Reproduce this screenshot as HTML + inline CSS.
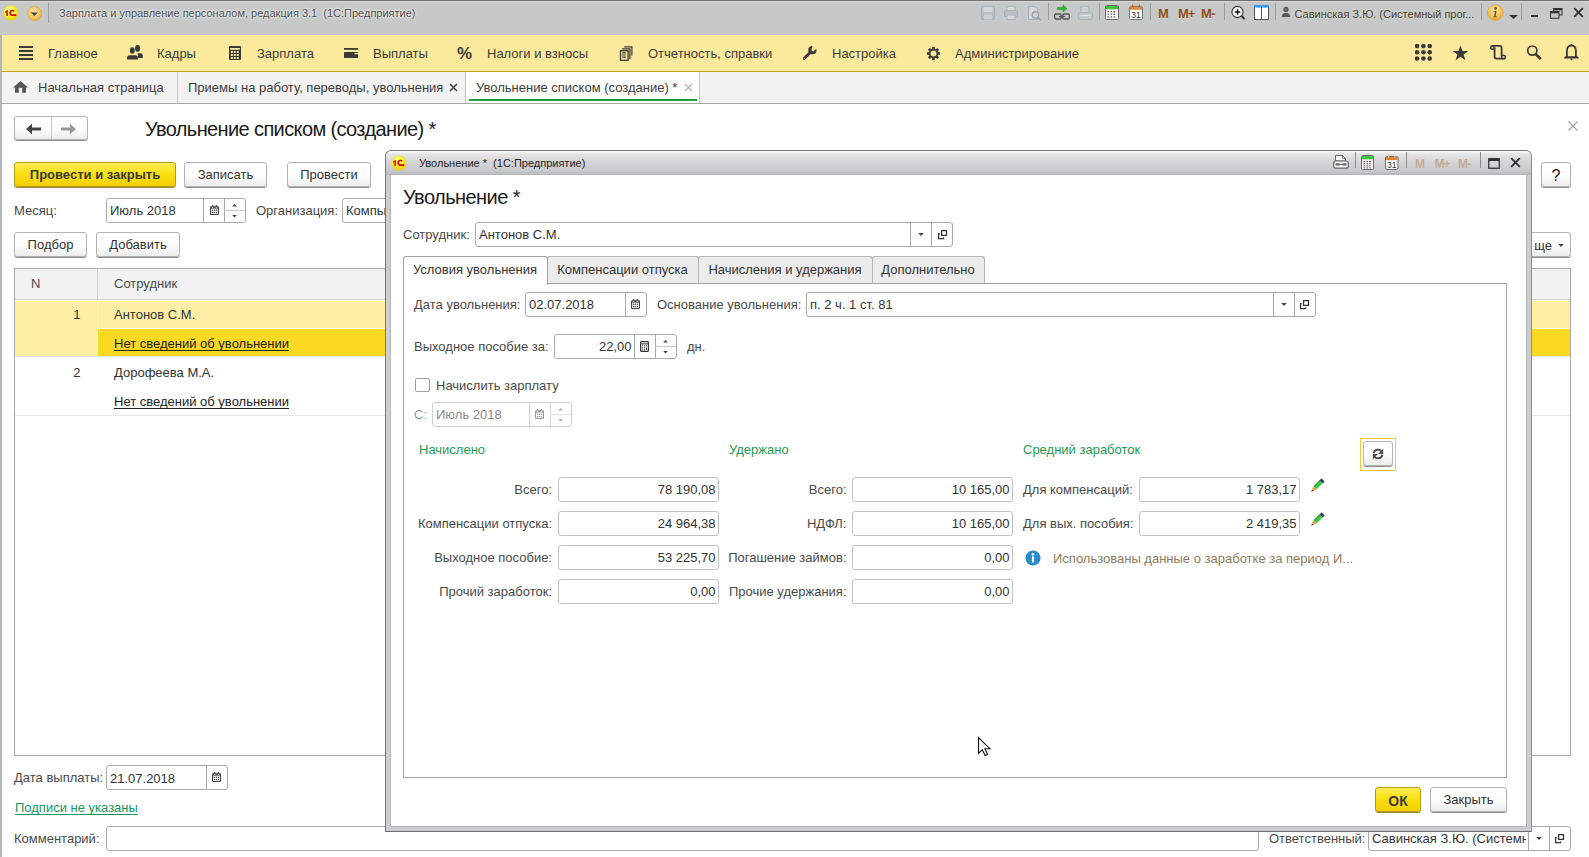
<!DOCTYPE html><html><head><meta charset="utf-8"><style>html,body{margin:0;padding:0;}body{width:1589px;height:857px;overflow:hidden;position:relative;background:#fff;font-family:"Liberation Sans", sans-serif;}u{text-decoration-skip-ink:none;text-underline-offset:1.5px;}</style></head><body><div style="position:absolute;left:0px;top:0px;width:1589px;height:35px;background:#c7c8c8;"></div>
<div style="position:absolute;left:0px;top:1px;width:1589px;height:1px;background:#d9d9d9;"></div>
<div style="position:absolute;left:0px;top:34px;width:1589px;height:1px;background:#c9c3cd;"></div>
<div style="position:absolute;left:0px;top:0px;width:1589px;height:1px;background:#6f6f6f;"></div>
<svg style="position:absolute;left:3px;top:5px" width="16" height="16" viewBox="0 0 16 16"><defs><radialGradient id="lg1" cx="0.42" cy="0.35" r="0.7"><stop offset="0" stop-color="#fbff9a"/><stop offset="0.55" stop-color="#f8ea2a"/><stop offset="1" stop-color="#f0cc00"/></radialGradient></defs><circle cx="8" cy="8" r="7.4" fill="url(#lg1)"/><path d="M2.1 6.4 L4 5.2 H4.9 V10.9 H3.4 V7.2 L2.1 7.8 Z" fill="#e00000"/><path d="M11.1 6.3 A2.3 2.3 0 1 0 9.1 10.1 H13.3" fill="none" stroke="#e00000" stroke-width="1.6"/></svg>
<svg style="position:absolute;left:26.5px;top:5.5px" width="15" height="15" viewBox="0 0 15 15"><defs><radialGradient id="dg1" cx="0.45" cy="0.35" r="0.65"><stop offset="0" stop-color="#ffe3a0"/><stop offset="1" stop-color="#f2b447"/></radialGradient></defs><circle cx="7.5" cy="7.5" r="7" fill="url(#dg1)" stroke="#d7a03c" stroke-width="0.7"/><path d="M3.7 6.5 L11 6.5 L7.35 9.9 Z" fill="#4a4a4a"/></svg>
<div style="position:absolute;left:48px;top:3px;width:1px;height:20px;background:#a0a0a0;"></div>
<div style="position:absolute;left:59px;top:6.76px;line-height:12.65px;font-size:11px;color:#4a4a4a;font-weight:normal;white-space:nowrap;text-shadow:0 0 3px #fff,0 0 2px #fff;">Зарплата и управление персоналом, редакция 3.1&nbsp; (1С:Предприятие)</div>
<div style="position:absolute;left:0px;top:35px;width:1589px;height:36px;background:#fbe99c;"></div>
<div style="position:absolute;left:0px;top:68px;width:1589px;height:3px;background:#fcec9e;"></div>
<div style="position:absolute;left:0px;top:71px;width:1589px;height:1px;background:#c3a626;"></div>
<div style="position:absolute;left:48px;top:47.32px;line-height:14.95px;font-size:13px;color:#3d3d3d;font-weight:normal;white-space:nowrap;">Главное</div>
<div style="position:absolute;left:157px;top:47.32px;line-height:14.95px;font-size:13px;color:#3d3d3d;font-weight:normal;white-space:nowrap;">Кадры</div>
<div style="position:absolute;left:257px;top:47.32px;line-height:14.95px;font-size:13px;color:#3d3d3d;font-weight:normal;white-space:nowrap;">Зарплата</div>
<div style="position:absolute;left:373px;top:47.32px;line-height:14.95px;font-size:13px;color:#3d3d3d;font-weight:normal;white-space:nowrap;">Выплаты</div>
<div style="position:absolute;left:487px;top:47.32px;line-height:14.95px;font-size:13px;color:#3d3d3d;font-weight:normal;white-space:nowrap;">Налоги и взносы</div>
<div style="position:absolute;left:648px;top:47.32px;line-height:14.95px;font-size:13px;color:#3d3d3d;font-weight:normal;white-space:nowrap;">Отчетность, справки</div>
<div style="position:absolute;left:832px;top:47.32px;line-height:14.95px;font-size:13px;color:#3d3d3d;font-weight:normal;white-space:nowrap;">Настройка</div>
<div style="position:absolute;left:955px;top:47.32px;line-height:14.95px;font-size:13px;color:#3d3d3d;font-weight:normal;white-space:nowrap;">Администрирование</div>
<div style="position:absolute;left:0px;top:72px;width:1589px;height:31px;background:#f2f2f2;"></div>
<div style="position:absolute;left:0px;top:103px;width:1589px;height:1px;background:#a6a6a6;"></div>
<div style="position:absolute;left:177px;top:72px;width:1px;height:31px;background:#c6c6c6;"></div>
<div style="position:absolute;left:465px;top:72px;width:1px;height:31px;background:#c6c6c6;"></div>
<div style="position:absolute;left:466px;top:72px;width:234px;height:31px;background:#fff;"></div>
<div style="position:absolute;left:699px;top:72px;width:1px;height:31px;background:#c6c6c6;"></div>
<div style="position:absolute;left:469px;top:99px;width:228px;height:2px;background:#1c9a48;"></div>
<div style="position:absolute;left:38px;top:81.32px;line-height:14.95px;font-size:13px;color:#3d3d3d;font-weight:normal;white-space:nowrap;">Начальная страница</div>
<div style="position:absolute;left:188px;top:81.32px;line-height:14.95px;font-size:13px;color:#3d3d3d;font-weight:normal;white-space:nowrap;">Приемы на работу, переводы, увольнения</div>
<div style="position:absolute;left:476px;top:81.32px;line-height:14.95px;font-size:13px;color:#3d3d3d;font-weight:normal;white-space:nowrap;">Увольнение списком (создание) *</div>
<div style="position:absolute;left:0px;top:35px;width:2px;height:822px;background:#b5b5b5;"></div>
<svg style="position:absolute;left:1568px;top:121px" width="10" height="10" viewBox="0 0 10 10"><path d="M0.5 0.5 L9.5 9.5 M9.5 0.5 L0.5 9.5" stroke="#a0a0a0" stroke-width="1.2"/></svg>
<div style="position:absolute;left:14px;top:116px;width:72px;height:22px;border-radius:3px;background:linear-gradient(#ffffff,#fdfdfd 55%,#ececec);border:1px solid #b3b3b3;box-shadow:0 1px 0 #8f8f8f;"></div>
<div style="position:absolute;left:51px;top:117px;width:1px;height:22px;background:#c9c9c9;"></div>
<svg style="position:absolute;left:25px;top:123px" width="17" height="12" viewBox="0 0 17 12"><path d="M1 6 L7 0.8 V4.4 H16 V7.6 H7 V11.2 Z" fill="#444"/></svg>
<svg style="position:absolute;left:60px;top:123px" width="17" height="12" viewBox="0 0 17 12"><path d="M16 6 L10 0.8 V4.4 H1 V7.6 H10 V11.2 Z" fill="#999"/></svg>
<div style="position:absolute;left:145px;top:118.37px;line-height:23.00px;font-size:20px;color:#1a1a1a;font-weight:normal;white-space:nowrap;letter-spacing:-0.62px;">Увольнение списком (создание) *</div>
<div style="position:absolute;left:14px;top:162px;width:160px;height:23px;border-radius:3px;background:linear-gradient(#ffec55,#fbdf10 50%,#f3d000);border:1px solid #b59b1c;box-shadow:0 1px 0 #9c8a3a;"></div>
<div style="position:absolute;left:14px;width:162px;top:168.33px;line-height:14.95px;font-size:13px;text-align:center;color:#3a3a3a;font-weight:bold;white-space:nowrap">Провести и закрыть</div>
<div style="position:absolute;left:184px;top:162px;width:81px;height:23px;border-radius:3px;background:linear-gradient(#ffffff,#fdfdfd 55%,#ececec);border:1px solid #b3b3b3;box-shadow:0 1px 0 #8f8f8f;"></div>
<div style="position:absolute;left:184px;width:83px;top:168.33px;line-height:14.95px;font-size:13px;text-align:center;color:#333;font-weight:normal;white-space:nowrap">Записать</div>
<div style="position:absolute;left:287px;top:162px;width:82px;height:23px;border-radius:3px;background:linear-gradient(#ffffff,#fdfdfd 55%,#ececec);border:1px solid #b3b3b3;box-shadow:0 1px 0 #8f8f8f;"></div>
<div style="position:absolute;left:287px;width:84px;top:168.33px;line-height:14.95px;font-size:13px;text-align:center;color:#333;font-weight:normal;white-space:nowrap">Провести</div>
<div style="position:absolute;left:1541px;top:162px;width:28px;height:23px;border-radius:3px;background:linear-gradient(#ffffff,#fdfdfd 55%,#ececec);border:1px solid #b3b3b3;box-shadow:0 1px 0 #8f8f8f;"></div>
<div style="position:absolute;left:1556px;top:167.46px;line-height:18.40px;font-size:16px;color:#111;font-weight:normal;white-space:nowrap;transform:translateX(-50%);">?</div>
<div style="position:absolute;left:14px;top:204.02px;line-height:14.95px;font-size:13px;color:#4a4a4a;font-weight:normal;white-space:nowrap;">Месяц:</div>
<div style="position:absolute;left:106px;top:198px;width:138px;height:23px;border-radius:3px;border:1px solid #a9a9a9;background:#fff"></div>
<div style="position:absolute;left:203px;top:199px;width:1px;height:23px;background:#a9a9a9;"></div>
<div style="position:absolute;left:224px;top:199px;width:1px;height:23px;background:#a9a9a9;"></div>
<div style="position:absolute;left:224px;top:210px;width:21px;height:1px;background:#c9c9c9;"></div>
<div style="position:absolute;left:110px;top:204.02px;line-height:14.95px;font-size:13px;color:#333;font-weight:normal;white-space:nowrap;">Июль 2018</div>
<svg style="position:absolute;left:210px;top:205px" width="9" height="10" viewBox="0 0 9 10"><rect x="0" y="1.2" width="9" height="8.8" rx="1.3" fill="#444"/><rect x="1.1" y="3.6" width="6.8" height="5.3" fill="#fff"/><rect x="1.9" y="0" width="1.4" height="2.4" fill="#444"/><rect x="5.7" y="0" width="1.4" height="2.4" fill="#444"/><rect x="1.9" y="1.9" width="1.4" height="0.8" fill="#fff"/><rect x="5.7" y="1.9" width="1.4" height="0.8" fill="#fff"/><circle cx="2.5" cy="5.3" r="0.75" fill="#444"/><circle cx="2.5" cy="7.4" r="0.75" fill="#444"/><circle cx="4.5" cy="5.3" r="0.75" fill="#444"/><circle cx="4.5" cy="7.4" r="0.75" fill="#444"/><circle cx="6.5" cy="5.3" r="0.75" fill="#444"/><circle cx="6.5" cy="7.4" r="0.75" fill="#444"/></svg>
<svg style="position:absolute;left:232.0px;top:204px" width="5" height="3" viewBox="0 0 5 3"><path d="M2.5 0 L4.8 2.4 L0.2 2.4 Z" fill="#444"/></svg>
<svg style="position:absolute;left:232.0px;top:214.5px" width="5" height="3" viewBox="0 0 5 3"><path d="M0.2 0 L4.8 0 L2.5 2.4 Z" fill="#444"/></svg>
<div style="position:absolute;left:256px;top:204.02px;line-height:14.95px;font-size:13px;color:#4a4a4a;font-weight:normal;white-space:nowrap;">Организация:</div>
<div style="position:absolute;left:342px;top:198px;width:76px;height:23px;border-radius:3px;border:1px solid #a9a9a9;background:#fff"></div>
<div style="position:absolute;left:346px;top:204.02px;line-height:14.95px;font-size:13px;color:#333;font-weight:normal;white-space:nowrap;">Компьютер</div>
<div style="position:absolute;left:14px;top:232px;width:71px;height:23px;border-radius:3px;background:linear-gradient(#ffffff,#fdfdfd 55%,#ececec);border:1px solid #b3b3b3;box-shadow:0 1px 0 #8f8f8f;"></div>
<div style="position:absolute;left:14px;width:73px;top:238.33px;line-height:14.95px;font-size:13px;text-align:center;color:#333;font-weight:normal;white-space:nowrap">Подбор</div>
<div style="position:absolute;left:96px;top:232px;width:82px;height:23px;border-radius:3px;background:linear-gradient(#ffffff,#fdfdfd 55%,#ececec);border:1px solid #b3b3b3;box-shadow:0 1px 0 #8f8f8f;"></div>
<div style="position:absolute;left:96px;width:84px;top:238.33px;line-height:14.95px;font-size:13px;text-align:center;color:#333;font-weight:normal;white-space:nowrap">Добавить</div>
<div style="position:absolute;left:1490px;top:232px;width:79px;height:23px;border-radius:3px;background:linear-gradient(#ffffff,#fdfdfd 55%,#ececec);border:1px solid #b3b3b3;box-shadow:0 1px 0 #8f8f8f;"></div>
<div style="position:absolute;right:37px;top:239.02px;line-height:14.95px;font-size:13px;color:#333;font-weight:normal;white-space:nowrap;text-align:right;">ще</div>
<svg style="position:absolute;left:1558px;top:244px" width="6" height="4" viewBox="0 0 6 4"><path d="M0.2 0 L5.8 0 L3 3 Z" fill="#444"/></svg>
<div style="position:absolute;left:14px;top:268px;width:1557px;height:488px;border:1px solid #a8a8a8;box-sizing:border-box;background:#fff;"></div>
<div style="position:absolute;left:15px;top:269px;width:1555px;height:30px;background:#f2f2f2;"></div>
<div style="position:absolute;left:15px;top:299px;width:1555px;height:1px;background:#cfcfd6;"></div>
<div style="position:absolute;left:97px;top:269px;width:1px;height:30px;background:#d6d6d6;"></div>
<div style="position:absolute;left:31px;top:277.02px;line-height:14.95px;font-size:13px;color:#4a4a4a;font-weight:normal;white-space:nowrap;">N</div>
<div style="position:absolute;left:114px;top:277.02px;line-height:14.95px;font-size:13px;color:#4a4a4a;font-weight:normal;white-space:nowrap;">Сотрудник</div>
<div style="position:absolute;left:15px;top:301px;width:1555px;height:55px;background:#fdf0a4;"></div>
<div style="position:absolute;left:98px;top:329px;width:1472px;height:27px;background:#fad922;"></div>
<div style="position:absolute;left:97px;top:300px;width:1px;height:56px;background:#fdf6cf;"></div>
<div style="position:absolute;left:98px;top:328px;width:1472px;height:1px;background:#fdf8dc;"></div>
<div style="position:absolute;right:1508.5px;top:307.52px;line-height:14.95px;font-size:13px;color:#333;font-weight:normal;white-space:nowrap;text-align:right;">1</div>
<div style="position:absolute;left:114px;top:307.52px;line-height:14.95px;font-size:13px;color:#333;font-weight:normal;white-space:nowrap;">Антонов С.М.</div>
<div style="position:absolute;left:114px;top:336.52px;line-height:14.95px;font-size:13px;color:#222;font-weight:normal;white-space:nowrap;"><u>Нет сведений об увольнении</u></div>
<div style="position:absolute;left:15px;top:356px;width:1555px;height:1px;background:#e6e6e6;"></div>
<div style="position:absolute;right:1508.5px;top:365.52px;line-height:14.95px;font-size:13px;color:#333;font-weight:normal;white-space:nowrap;text-align:right;">2</div>
<div style="position:absolute;left:114px;top:365.52px;line-height:14.95px;font-size:13px;color:#333;font-weight:normal;white-space:nowrap;">Дорофеева М.А.</div>
<div style="position:absolute;left:114px;top:394.52px;line-height:14.95px;font-size:13px;color:#222;font-weight:normal;white-space:nowrap;"><u>Нет сведений об увольнении</u></div>
<div style="position:absolute;left:15px;top:415px;width:1555px;height:1px;background:#e6e6e6;"></div>
<div style="position:absolute;left:14px;top:771.32px;line-height:14.95px;font-size:13px;color:#4a4a4a;font-weight:normal;white-space:nowrap;">Дата выплаты:</div>
<div style="position:absolute;left:106px;top:765px;width:120px;height:23px;border-radius:3px;border:1px solid #a9a9a9;background:#fff"></div>
<div style="position:absolute;left:206px;top:766px;width:1px;height:23px;background:#a9a9a9;"></div>
<div style="position:absolute;left:110px;top:772.02px;line-height:14.95px;font-size:13px;color:#333;font-weight:normal;white-space:nowrap;">21.07.2018</div>
<svg style="position:absolute;left:212px;top:772px" width="9" height="10" viewBox="0 0 9 10"><rect x="0" y="1.2" width="9" height="8.8" rx="1.3" fill="#444"/><rect x="1.1" y="3.6" width="6.8" height="5.3" fill="#fff"/><rect x="1.9" y="0" width="1.4" height="2.4" fill="#444"/><rect x="5.7" y="0" width="1.4" height="2.4" fill="#444"/><rect x="1.9" y="1.9" width="1.4" height="0.8" fill="#fff"/><rect x="5.7" y="1.9" width="1.4" height="0.8" fill="#fff"/><circle cx="2.5" cy="5.3" r="0.75" fill="#444"/><circle cx="2.5" cy="7.4" r="0.75" fill="#444"/><circle cx="4.5" cy="5.3" r="0.75" fill="#444"/><circle cx="4.5" cy="7.4" r="0.75" fill="#444"/><circle cx="6.5" cy="5.3" r="0.75" fill="#444"/><circle cx="6.5" cy="7.4" r="0.75" fill="#444"/></svg>
<div style="position:absolute;left:15px;top:800.52px;line-height:14.95px;font-size:13px;color:#14985a;font-weight:normal;white-space:nowrap;"><u>Подписи не указаны</u></div>
<div style="position:absolute;left:14px;top:831.82px;line-height:14.95px;font-size:13px;color:#4a4a4a;font-weight:normal;white-space:nowrap;">Комментарий:</div>
<div style="position:absolute;left:106px;top:826px;width:1151px;height:23px;border-radius:3px;border:1px solid #a9a9a9;background:#fff"></div>
<div style="position:absolute;left:1269px;top:831.82px;line-height:14.95px;font-size:13px;color:#4a4a4a;font-weight:normal;white-space:nowrap;">Ответственный:</div>
<div style="position:absolute;left:1368px;top:826px;width:201px;height:23px;border-radius:3px;border:1px solid #a9a9a9;background:#fff"></div>
<div style="position:absolute;left:1528px;top:827px;width:1px;height:23px;background:#a9a9a9;"></div>
<div style="position:absolute;left:1549px;top:827px;width:1px;height:23px;background:#a9a9a9;"></div>
<div style="position:absolute;left:1372px;top:831.82px;line-height:14.95px;font-size:13px;color:#333;font-weight:normal;white-space:nowrap;width:154px;overflow:hidden;">Савинская З.Ю. (Системн</div>
<svg style="position:absolute;left:1536px;top:837px" width="6" height="4" viewBox="0 0 6 4"><path d="M0.2 0 L5.8 0 L3 3 Z" fill="#444"/></svg>
<svg style="position:absolute;left:1554px;top:833px" width="11" height="11" viewBox="0 0 11 11"><path d="M4.6 1.7 H9.5 V6.4 H4.6 Z" fill="none" stroke="#333" stroke-width="1.25"/><path d="M2.8 4.6 H1.6 V9.5 H6.6 V8.6" fill="none" stroke="#333" stroke-width="1.25"/></svg>
<div style="position:absolute;left:385px;top:150px;width:1145px;height:680px;border:1px solid #777;border-right-color:#8d8d8d;border-bottom-color:#6f6f6f;border-radius:6px 6px 0 0;background:#cdcdcf;"></div>
<div style="position:absolute;left:386px;top:151px;width:1145px;height:24px;border-radius:5px 5px 0 0;background:linear-gradient(#fafafa 0px,#e6e6e7 3px,#d6d6d8 10px,#c9cacc 19px,#b9babc 24px);"></div>
<div style="position:absolute;left:391px;top:175px;width:1135px;height:651px;background:#fff;box-shadow:0 0 0 1px #b5b5b5;"></div>
<svg style="position:absolute;left:391px;top:155px" width="16" height="16" viewBox="0 0 16 16"><defs><radialGradient id="lg2" cx="0.42" cy="0.35" r="0.7"><stop offset="0" stop-color="#fbff9a"/><stop offset="0.55" stop-color="#f8ea2a"/><stop offset="1" stop-color="#f0cc00"/></radialGradient></defs><circle cx="8" cy="8" r="7.4" fill="url(#lg2)"/><path d="M2.1 6.4 L4 5.2 H4.9 V10.9 H3.4 V7.2 L2.1 7.8 Z" fill="#e00000"/><path d="M11.1 6.3 A2.3 2.3 0 1 0 9.1 10.1 H13.3" fill="none" stroke="#e00000" stroke-width="1.6"/></svg>
<div style="position:absolute;left:419px;top:157.46px;line-height:12.65px;font-size:11px;color:#1e1e1e;font-weight:normal;white-space:nowrap;">Увольнение *&nbsp; (1С:Предприятие)</div>
<div style="position:absolute;left:403px;top:185.57px;line-height:23.00px;font-size:20px;color:#1a1a1a;font-weight:normal;white-space:nowrap;letter-spacing:-0.55px;">Увольнение *</div>
<div style="position:absolute;left:403px;top:228.02px;line-height:14.95px;font-size:13px;color:#4a4a4a;font-weight:normal;white-space:nowrap;">Сотрудник:</div>
<div style="position:absolute;left:475px;top:222px;width:476px;height:23px;border-radius:3px;border:1px solid #a9a9a9;background:#fff"></div>
<div style="position:absolute;left:910px;top:223px;width:1px;height:23px;background:#a9a9a9;"></div>
<div style="position:absolute;left:931px;top:223px;width:1px;height:23px;background:#a9a9a9;"></div>
<div style="position:absolute;left:479px;top:228.02px;line-height:14.95px;font-size:13px;color:#333;font-weight:normal;white-space:nowrap;">Антонов С.М.</div>
<svg style="position:absolute;left:918px;top:233px" width="6" height="4" viewBox="0 0 6 4"><path d="M0.2 0 L5.8 0 L3 3 Z" fill="#444"/></svg>
<svg style="position:absolute;left:937px;top:229px" width="11" height="11" viewBox="0 0 11 11"><path d="M4.6 1.7 H9.5 V6.4 H4.6 Z" fill="none" stroke="#333" stroke-width="1.25"/><path d="M2.8 4.6 H1.6 V9.5 H6.6 V8.6" fill="none" stroke="#333" stroke-width="1.25"/></svg>
<div style="position:absolute;left:403px;top:283px;width:1104px;height:495px;border:1px solid #a3a3a3;box-sizing:border-box;background:#fff;"></div>
<div style="position:absolute;left:547px;top:256px;width:150px;height:26px;border:1px solid #b5b5b5;border-bottom:none;border-radius:3px 3px 0 0;background:#ececec;"></div>
<div style="position:absolute;left:622.5px;top:262.52px;line-height:14.95px;font-size:13px;color:#333;font-weight:normal;white-space:nowrap;transform:translateX(-50%);">Компенсации отпуска</div>
<div style="position:absolute;left:698px;top:256px;width:173px;height:26px;border:1px solid #b5b5b5;border-bottom:none;border-radius:3px 3px 0 0;background:#ececec;"></div>
<div style="position:absolute;left:785.0px;top:262.52px;line-height:14.95px;font-size:13px;color:#333;font-weight:normal;white-space:nowrap;transform:translateX(-50%);">Начисления и удержания</div>
<div style="position:absolute;left:872px;top:256px;width:111px;height:26px;border:1px solid #b5b5b5;border-bottom:none;border-radius:3px 3px 0 0;background:#ececec;"></div>
<div style="position:absolute;left:928.0px;top:262.52px;line-height:14.95px;font-size:13px;color:#333;font-weight:normal;white-space:nowrap;transform:translateX(-50%);">Дополнительно</div>
<div style="position:absolute;left:403px;top:256px;width:143px;height:28px;border:1px solid #a3a3a3;border-bottom:none;border-radius:3px 3px 0 0;background:#fff;box-sizing:content-box"></div>
<div style="position:absolute;left:475.0px;top:262.52px;line-height:14.95px;font-size:13px;color:#333;font-weight:normal;white-space:nowrap;transform:translateX(-50%);">Условия увольнения</div>
<div style="position:absolute;left:414px;top:298.02px;line-height:14.95px;font-size:13px;color:#4a4a4a;font-weight:normal;white-space:nowrap;">Дата увольнения:</div>
<div style="position:absolute;left:525px;top:292px;width:120px;height:23px;border-radius:3px;border:1px solid #a9a9a9;background:#fff"></div>
<div style="position:absolute;left:625px;top:293px;width:1px;height:23px;background:#a9a9a9;"></div>
<div style="position:absolute;left:529px;top:298.02px;line-height:14.95px;font-size:13px;color:#333;font-weight:normal;white-space:nowrap;">02.07.2018</div>
<svg style="position:absolute;left:631px;top:299px" width="9" height="10" viewBox="0 0 9 10"><rect x="0" y="1.2" width="9" height="8.8" rx="1.3" fill="#444"/><rect x="1.1" y="3.6" width="6.8" height="5.3" fill="#fff"/><rect x="1.9" y="0" width="1.4" height="2.4" fill="#444"/><rect x="5.7" y="0" width="1.4" height="2.4" fill="#444"/><rect x="1.9" y="1.9" width="1.4" height="0.8" fill="#fff"/><rect x="5.7" y="1.9" width="1.4" height="0.8" fill="#fff"/><circle cx="2.5" cy="5.3" r="0.75" fill="#444"/><circle cx="2.5" cy="7.4" r="0.75" fill="#444"/><circle cx="4.5" cy="5.3" r="0.75" fill="#444"/><circle cx="4.5" cy="7.4" r="0.75" fill="#444"/><circle cx="6.5" cy="5.3" r="0.75" fill="#444"/><circle cx="6.5" cy="7.4" r="0.75" fill="#444"/></svg>
<div style="position:absolute;left:657px;top:298.02px;line-height:14.95px;font-size:13px;color:#4a4a4a;font-weight:normal;white-space:nowrap;">Основание увольнения:</div>
<div style="position:absolute;left:806px;top:292px;width:508px;height:23px;border-radius:3px;border:1px solid #a9a9a9;background:#fff"></div>
<div style="position:absolute;left:1273px;top:293px;width:1px;height:23px;background:#a9a9a9;"></div>
<div style="position:absolute;left:1294px;top:293px;width:1px;height:23px;background:#a9a9a9;"></div>
<div style="position:absolute;left:810px;top:298.02px;line-height:14.95px;font-size:13px;color:#333;font-weight:normal;white-space:nowrap;">п. 2 ч. 1 ст. 81</div>
<svg style="position:absolute;left:1281px;top:303px" width="6" height="4" viewBox="0 0 6 4"><path d="M0.2 0 L5.8 0 L3 3 Z" fill="#444"/></svg>
<svg style="position:absolute;left:1299px;top:299px" width="11" height="11" viewBox="0 0 11 11"><path d="M4.6 1.7 H9.5 V6.4 H4.6 Z" fill="none" stroke="#333" stroke-width="1.25"/><path d="M2.8 4.6 H1.6 V9.5 H6.6 V8.6" fill="none" stroke="#333" stroke-width="1.25"/></svg>
<div style="position:absolute;left:414px;top:340.02px;line-height:14.95px;font-size:13px;color:#4a4a4a;font-weight:normal;white-space:nowrap;">Выходное пособие за:</div>
<div style="position:absolute;left:554px;top:334px;width:121px;height:23px;border-radius:3px;border:1px solid #a9a9a9;background:#fff"></div>
<div style="position:absolute;left:634px;top:335px;width:1px;height:23px;background:#a9a9a9;"></div>
<div style="position:absolute;left:655px;top:335px;width:1px;height:23px;background:#a9a9a9;"></div>
<div style="position:absolute;left:655px;top:346px;width:21px;height:1px;background:#c9c9c9;"></div>
<div style="position:absolute;right:957.5px;top:340.02px;line-height:14.95px;font-size:13px;color:#333;font-weight:normal;white-space:nowrap;text-align:right;">22,00</div>
<svg style="position:absolute;left:640px;top:341px" width="9" height="11" viewBox="0 0 9 11"><rect x="0.6" y="0.6" width="7.8" height="9.8" rx="0.8" fill="none" stroke="#333" stroke-width="1.2"/><rect x="0.6" y="2.4" width="7.8" height="1" fill="#333"/><circle cx="2.5" cy="4.9" r="0.55" fill="#333"/><circle cx="2.5" cy="6.9" r="0.55" fill="#333"/><circle cx="2.5" cy="8.9" r="0.55" fill="#333"/><circle cx="4.5" cy="4.9" r="0.55" fill="#333"/><circle cx="4.5" cy="6.9" r="0.55" fill="#333"/><circle cx="4.5" cy="8.9" r="0.55" fill="#333"/><circle cx="6.5" cy="4.9" r="0.55" fill="#333"/><rect x="6" y="6.2" width="1" height="3" rx="0.5" fill="#333"/></svg>
<svg style="position:absolute;left:663.0px;top:340px" width="5" height="3" viewBox="0 0 5 3"><path d="M2.5 0 L4.8 2.4 L0.2 2.4 Z" fill="#444"/></svg>
<svg style="position:absolute;left:663.0px;top:350.5px" width="5" height="3" viewBox="0 0 5 3"><path d="M0.2 0 L4.8 0 L2.5 2.4 Z" fill="#444"/></svg>
<div style="position:absolute;left:687px;top:340.02px;line-height:14.95px;font-size:13px;color:#4a4a4a;font-weight:normal;white-space:nowrap;">дн.</div>
<div style="position:absolute;left:415px;top:378px;width:15px;height:14px;border:1px solid #9d9d9d;border-radius:2px;box-sizing:border-box;background:#fff;"></div>
<div style="position:absolute;left:436px;top:378.52px;line-height:14.95px;font-size:13px;color:#4a4a4a;font-weight:normal;white-space:nowrap;">Начислить зарплату</div>
<div style="position:absolute;left:414px;top:408.02px;line-height:14.95px;font-size:13px;color:#9a9a9a;font-weight:normal;white-space:nowrap;">С:</div>
<div style="position:absolute;left:432px;top:402px;width:138px;height:23px;border-radius:3px;border:1px solid #cfcfcf;background:#fff"></div>
<div style="position:absolute;left:529px;top:403px;width:1px;height:23px;background:#d5d5d5;"></div>
<div style="position:absolute;left:550px;top:403px;width:1px;height:23px;background:#d5d5d5;"></div>
<div style="position:absolute;left:550px;top:414px;width:21px;height:1px;background:#e2e2e2;"></div>
<div style="position:absolute;left:436px;top:408.02px;line-height:14.95px;font-size:13px;color:#8a8a8a;font-weight:normal;white-space:nowrap;">Июль 2018</div>
<svg style="position:absolute;left:535px;top:409px" width="9" height="10" viewBox="0 0 9 10"><rect x="0" y="1.2" width="9" height="8.8" rx="1.3" fill="#9a9a9a"/><rect x="1.1" y="3.6" width="6.8" height="5.3" fill="#fff"/><rect x="1.9" y="0" width="1.4" height="2.4" fill="#9a9a9a"/><rect x="5.7" y="0" width="1.4" height="2.4" fill="#9a9a9a"/><rect x="1.9" y="1.9" width="1.4" height="0.8" fill="#fff"/><rect x="5.7" y="1.9" width="1.4" height="0.8" fill="#fff"/><circle cx="2.5" cy="5.3" r="0.75" fill="#9a9a9a"/><circle cx="2.5" cy="7.4" r="0.75" fill="#9a9a9a"/><circle cx="4.5" cy="5.3" r="0.75" fill="#9a9a9a"/><circle cx="4.5" cy="7.4" r="0.75" fill="#9a9a9a"/><circle cx="6.5" cy="5.3" r="0.75" fill="#9a9a9a"/><circle cx="6.5" cy="7.4" r="0.75" fill="#9a9a9a"/></svg>
<svg style="position:absolute;left:558.0px;top:408px" width="5" height="3" viewBox="0 0 5 3"><path d="M2.5 0 L4.8 2.4 L0.2 2.4 Z" fill="#aaa"/></svg>
<svg style="position:absolute;left:558.0px;top:418.5px" width="5" height="3" viewBox="0 0 5 3"><path d="M0.2 0 L4.8 0 L2.5 2.4 Z" fill="#aaa"/></svg>
<div style="position:absolute;left:419px;top:443.02px;line-height:14.95px;font-size:13px;color:#1f9a50;font-weight:normal;white-space:nowrap;">Начислено</div>
<div style="position:absolute;left:729px;top:443.02px;line-height:14.95px;font-size:13px;color:#1f9a50;font-weight:normal;white-space:nowrap;">Удержано</div>
<div style="position:absolute;left:1023px;top:443.02px;line-height:14.95px;font-size:13px;color:#1f9a50;font-weight:normal;white-space:nowrap;">Средний заработок</div>
<div style="position:absolute;left:1360px;top:438px;width:36px;height:33px;border:1px solid #f3cb2a;box-sizing:border-box;"></div>
<div style="position:absolute;left:1363px;top:441px;width:28px;height:23px;border-radius:3px;background:linear-gradient(#ffffff,#fdfdfd 55%,#ececec);border:1px solid #b3b3b3;box-shadow:0 1px 0 #8f8f8f;"></div>
<svg style="position:absolute;left:1372px;top:448px" width="12" height="12" viewBox="0 0 12 12"><path d="M1.6 5.2 A4.4 4.4 0 0 1 9.4 3.4" fill="none" stroke="#505050" stroke-width="2"/><path d="M11.2 0.8 V6 H6 Z" fill="#505050"/><path d="M10.4 6.8 A4.4 4.4 0 0 1 2.6 8.6" fill="none" stroke="#505050" stroke-width="2"/><path d="M0.8 11.2 V6 H6 Z" fill="#505050"/></svg>
<div style="position:absolute;right:1037px;top:483.02px;line-height:14.95px;font-size:13px;color:#4a4a4a;font-weight:normal;white-space:nowrap;text-align:right;">Всего:</div>
<div style="position:absolute;left:558px;top:477px;width:159px;height:23px;border-radius:3px;border:1px solid #c2c2c2;background:#fff"></div>
<div style="position:absolute;right:873.5px;top:483.02px;line-height:14.95px;font-size:13px;color:#333;font-weight:normal;white-space:nowrap;text-align:right;">78 190,08</div>
<div style="position:absolute;right:742.5px;top:483.02px;line-height:14.95px;font-size:13px;color:#4a4a4a;font-weight:normal;white-space:nowrap;text-align:right;">Всего:</div>
<div style="position:absolute;left:852px;top:477px;width:159px;height:23px;border-radius:3px;border:1px solid #c2c2c2;background:#fff"></div>
<div style="position:absolute;right:579.5px;top:483.02px;line-height:14.95px;font-size:13px;color:#333;font-weight:normal;white-space:nowrap;text-align:right;">10 165,00</div>
<div style="position:absolute;left:1023px;top:483.02px;line-height:14.95px;font-size:13px;color:#4a4a4a;font-weight:normal;white-space:nowrap;">Для компенсаций:</div>
<div style="position:absolute;left:1139px;top:477px;width:159px;height:23px;border-radius:3px;border:1px solid #c2c2c2;background:#fff"></div>
<div style="position:absolute;right:292.5px;top:483.02px;line-height:14.95px;font-size:13px;color:#333;font-weight:normal;white-space:nowrap;text-align:right;">1 783,17</div>
<div style="position:absolute;right:1037px;top:517.02px;line-height:14.95px;font-size:13px;color:#4a4a4a;font-weight:normal;white-space:nowrap;text-align:right;">Компенсации отпуска:</div>
<div style="position:absolute;left:558px;top:511px;width:159px;height:23px;border-radius:3px;border:1px solid #c2c2c2;background:#fff"></div>
<div style="position:absolute;right:873.5px;top:517.02px;line-height:14.95px;font-size:13px;color:#333;font-weight:normal;white-space:nowrap;text-align:right;">24 964,38</div>
<div style="position:absolute;right:742.5px;top:517.02px;line-height:14.95px;font-size:13px;color:#4a4a4a;font-weight:normal;white-space:nowrap;text-align:right;">НДФЛ:</div>
<div style="position:absolute;left:852px;top:511px;width:159px;height:23px;border-radius:3px;border:1px solid #c2c2c2;background:#fff"></div>
<div style="position:absolute;right:579.5px;top:517.02px;line-height:14.95px;font-size:13px;color:#333;font-weight:normal;white-space:nowrap;text-align:right;">10 165,00</div>
<div style="position:absolute;left:1023px;top:517.02px;line-height:14.95px;font-size:13px;color:#4a4a4a;font-weight:normal;white-space:nowrap;">Для вых. пособия:</div>
<div style="position:absolute;left:1139px;top:511px;width:159px;height:23px;border-radius:3px;border:1px solid #c2c2c2;background:#fff"></div>
<div style="position:absolute;right:292.5px;top:517.02px;line-height:14.95px;font-size:13px;color:#333;font-weight:normal;white-space:nowrap;text-align:right;">2 419,35</div>
<div style="position:absolute;right:1037px;top:551.02px;line-height:14.95px;font-size:13px;color:#4a4a4a;font-weight:normal;white-space:nowrap;text-align:right;">Выходное пособие:</div>
<div style="position:absolute;left:558px;top:545px;width:159px;height:23px;border-radius:3px;border:1px solid #c2c2c2;background:#fff"></div>
<div style="position:absolute;right:873.5px;top:551.02px;line-height:14.95px;font-size:13px;color:#333;font-weight:normal;white-space:nowrap;text-align:right;">53 225,70</div>
<div style="position:absolute;right:742.5px;top:551.02px;line-height:14.95px;font-size:13px;color:#4a4a4a;font-weight:normal;white-space:nowrap;text-align:right;">Погашение займов:</div>
<div style="position:absolute;left:852px;top:545px;width:159px;height:23px;border-radius:3px;border:1px solid #c2c2c2;background:#fff"></div>
<div style="position:absolute;right:579.5px;top:551.02px;line-height:14.95px;font-size:13px;color:#333;font-weight:normal;white-space:nowrap;text-align:right;">0,00</div>
<div style="position:absolute;right:1037px;top:585.02px;line-height:14.95px;font-size:13px;color:#4a4a4a;font-weight:normal;white-space:nowrap;text-align:right;">Прочий заработок:</div>
<div style="position:absolute;left:558px;top:579px;width:159px;height:23px;border-radius:3px;border:1px solid #c2c2c2;background:#fff"></div>
<div style="position:absolute;right:873.5px;top:585.02px;line-height:14.95px;font-size:13px;color:#333;font-weight:normal;white-space:nowrap;text-align:right;">0,00</div>
<div style="position:absolute;right:742.5px;top:585.02px;line-height:14.95px;font-size:13px;color:#4a4a4a;font-weight:normal;white-space:nowrap;text-align:right;">Прочие удержания:</div>
<div style="position:absolute;left:852px;top:579px;width:159px;height:23px;border-radius:3px;border:1px solid #c2c2c2;background:#fff"></div>
<div style="position:absolute;right:579.5px;top:585.02px;line-height:14.95px;font-size:13px;color:#333;font-weight:normal;white-space:nowrap;text-align:right;">0,00</div>
<svg style="position:absolute;left:1306px;top:474px" width="24" height="24" viewBox="0 0 24 24"><g transform="translate(5.3 17.7) rotate(-45)"><path d="M0 0 L2.4 -1.2 L2.4 1.2 Z" fill="#222"/><path d="M2.4 -1.2 L5.6 -2.2 V2.2 L2.4 1.2 Z" fill="#e9a23c"/><rect x="5.6" y="-2.2" width="8.4" height="4.4" fill="#3ec84a"/><rect x="5.6" y="-2.2" width="8.4" height="1.2" fill="#2e9e3a"/><rect x="14" y="-2.2" width="2.6" height="4.4" rx="0.6" fill="#353a5e"/></g></svg>
<svg style="position:absolute;left:1306px;top:508px" width="24" height="24" viewBox="0 0 24 24"><g transform="translate(5.3 17.7) rotate(-45)"><path d="M0 0 L2.4 -1.2 L2.4 1.2 Z" fill="#222"/><path d="M2.4 -1.2 L5.6 -2.2 V2.2 L2.4 1.2 Z" fill="#e9a23c"/><rect x="5.6" y="-2.2" width="8.4" height="4.4" fill="#3ec84a"/><rect x="5.6" y="-2.2" width="8.4" height="1.2" fill="#2e9e3a"/><rect x="14" y="-2.2" width="2.6" height="4.4" rx="0.6" fill="#353a5e"/></g></svg>
<svg style="position:absolute;left:1025px;top:550px" width="16" height="16" viewBox="0 0 16 16"><circle cx="8" cy="8" r="7.6" fill="#2a8ac8"/><circle cx="8" cy="4.3" r="1.3" fill="#fff"/><rect x="6.9" y="6.4" width="2.2" height="6" fill="#fff"/></svg>
<div style="position:absolute;left:1053px;top:551.52px;line-height:14.95px;font-size:13px;color:#8c7d5e;font-weight:normal;white-space:nowrap;">Использованы данные о заработке за период И...</div>
<div style="position:absolute;left:1375px;top:787px;width:44px;height:23px;border-radius:3px;background:linear-gradient(#ffec55,#fbdf10 50%,#f3d000);border:1px solid #b59b1c;box-shadow:0 1px 0 #9c8a3a;"></div>
<div style="position:absolute;left:1375px;width:46px;top:792.75px;line-height:16.10px;font-size:14px;text-align:center;color:#3a3a3a;font-weight:bold;white-space:nowrap">ОК</div>
<div style="position:absolute;left:1430px;top:787px;width:75px;height:23px;border-radius:3px;background:linear-gradient(#ffffff,#fdfdfd 55%,#ececec);border:1px solid #b3b3b3;box-shadow:0 1px 0 #8f8f8f;"></div>
<div style="position:absolute;left:1430px;width:77px;top:793.32px;line-height:14.95px;font-size:13px;text-align:center;color:#333;font-weight:normal;white-space:nowrap">Закрыть</div>
<svg style="position:absolute;left:19px;top:46px" width="14" height="14" viewBox="0 0 14 14"><rect x="0" y="0" width="14" height="2" fill="#3a3a3a"/><rect x="0" y="4" width="14" height="2" fill="#3a3a3a"/><rect x="0" y="8" width="14" height="2" fill="#3a3a3a"/><rect x="0" y="12" width="14" height="2" fill="#3a3a3a"/></svg>
<svg style="position:absolute;left:126px;top:44px" width="18" height="17" viewBox="0 0 18 17"><ellipse cx="11.6" cy="4.4" rx="2.5" ry="3.3" fill="#3a3a3a"/><path d="M11.9 9.2 H14.6 Q16.8 9.2 16.8 11.4 V13.9 H11.9 Z" fill="#3a3a3a"/><ellipse cx="6.3" cy="6.5" rx="2.6" ry="3.4" fill="#fbe99c"/><ellipse cx="6.3" cy="6.5" rx="2.4" ry="3.2" fill="#3a3a3a"/><path d="M1 15.6 V13.8 Q1 11.2 3.6 11.2 H9 Q11.9 11.2 11.9 13.8 V15.6 Z" fill="#3a3a3a" stroke="#fbe99c" stroke-width="0"/></svg>
<svg style="position:absolute;left:229px;top:46px" width="12" height="14" viewBox="0 0 12 14"><rect x="0" y="0" width="12" height="14" rx="1" fill="#3a3a3a"/><rect x="1.2" y="2" width="9.6" height="1.8" fill="#fbe99c"/><rect x="1.8" y="5" width="2" height="2" fill="#fbe99c"/><rect x="1.8" y="8" width="2" height="2" fill="#fbe99c"/><rect x="1.8" y="11" width="2" height="2" fill="#fbe99c"/><rect x="4.8" y="5" width="2" height="2" fill="#fbe99c"/><rect x="4.8" y="8" width="2" height="2" fill="#fbe99c"/><rect x="4.8" y="11" width="2" height="2" fill="#fbe99c"/><rect x="7.8" y="5" width="2" height="2" fill="#fbe99c"/><rect x="7.8" y="8" width="2" height="2" fill="#fbe99c"/><rect x="7.8" y="11" width="2" height="2" fill="#fbe99c"/></svg>
<svg style="position:absolute;left:344px;top:48px" width="15" height="10" viewBox="0 0 15 10"><rect x="0" y="0" width="14" height="1.8" fill="#3a3a3a"/><rect x="0" y="3.9" width="14" height="6" rx="0.5" fill="#3a3a3a"/><rect x="10.5" y="5" width="4" height="1.2" fill="#fbe99c"/></svg>
<div style="position:absolute;left:457px;top:43.93px;line-height:19.55px;font-size:17px;color:#3a3a3a;font-weight:bold;white-space:nowrap;font-family:"Liberation Serif",serif;">%</div>
<svg style="position:absolute;left:619px;top:45px" width="19" height="16" viewBox="0 0 19 16"><rect x="1.5" y="5.7" width="7.6" height="9.6" fill="none" stroke="#3a3a3a" stroke-width="1.3"/><path d="M3.2 7.9 H6.8 M3.2 10 H6.8 M3.2 12.1 H6.8" stroke="#3a3a3a" stroke-width="1.2"/><path d="M3 3.9 H10.9 V14" fill="none" stroke="#3a3a3a" stroke-width="1.2"/><path d="M5.2 1.9 H12.9 V10.8" fill="none" stroke="#3a3a3a" stroke-width="1.2"/></svg>
<svg style="position:absolute;left:798px;top:40px" width="24" height="24" viewBox="0 0 24 24"><path d="M6.2 18.4 L12.4 12.2" stroke="#3a3a3a" stroke-width="2.8" stroke-linecap="round"/><circle cx="14.4" cy="10.2" r="4.1" fill="#3a3a3a"/><path d="M13.4 10.4 L14.6 4.8 L20.2 7.4 L15.2 11.4 Z" fill="#fbe99c"/><circle cx="6.3" cy="18.3" r="0.55" fill="#f4f4f4"/></svg>
<svg style="position:absolute;left:925.5px;top:45.5px" width="15" height="15" viewBox="0 0 15 15"><rect x="11.90" y="6.20" width="2.2" height="2.6" fill="#3a3a3a" transform="rotate(0 13.00 7.50)"/><rect x="10.29" y="10.09" width="2.2" height="2.6" fill="#3a3a3a" transform="rotate(45 11.39 11.39)"/><rect x="6.40" y="11.70" width="2.2" height="2.6" fill="#3a3a3a" transform="rotate(90 7.50 13.00)"/><rect x="2.51" y="10.09" width="2.2" height="2.6" fill="#3a3a3a" transform="rotate(135 3.61 11.39)"/><rect x="0.90" y="6.20" width="2.2" height="2.6" fill="#3a3a3a" transform="rotate(180 2.00 7.50)"/><rect x="2.51" y="2.31" width="2.2" height="2.6" fill="#3a3a3a" transform="rotate(225 3.61 3.61)"/><rect x="6.40" y="0.70" width="2.2" height="2.6" fill="#3a3a3a" transform="rotate(270 7.50 2.00)"/><rect x="10.29" y="2.31" width="2.2" height="2.6" fill="#3a3a3a" transform="rotate(315 11.39 3.61)"/><circle cx="7.5" cy="7.5" r="3.9" fill="none" stroke="#3a3a3a" stroke-width="1.8"/></svg>
<svg style="position:absolute;left:1415px;top:44px" width="18" height="17" viewBox="0 0 18 17"><circle cx="2.1" cy="2.1" r="2.3" fill="#3a3a3a"/><circle cx="2.1" cy="8.3" r="2.3" fill="#3a3a3a"/><circle cx="2.1" cy="14.5" r="2.3" fill="#3a3a3a"/><circle cx="8.4" cy="2.1" r="2.3" fill="#3a3a3a"/><circle cx="8.4" cy="8.3" r="2.3" fill="#3a3a3a"/><circle cx="8.4" cy="14.5" r="2.3" fill="#3a3a3a"/><circle cx="14.7" cy="2.1" r="2.3" fill="#3a3a3a"/><circle cx="14.7" cy="8.3" r="2.3" fill="#3a3a3a"/><circle cx="14.7" cy="14.5" r="2.3" fill="#3a3a3a"/></svg>
<svg style="position:absolute;left:1452px;top:45px" width="17" height="16" viewBox="0 0 17 16"><path d="M8.5 0.5 L10.5 6 L16.3 6 L11.6 9.5 L13.4 15.3 L8.5 11.8 L3.6 15.3 L5.4 9.5 L0.7 6 L6.5 6 Z" fill="#3a3a3a"/></svg>
<svg style="position:absolute;left:1489px;top:44px" width="18" height="17" viewBox="0 0 18 17"><path d="M3.4 1.9 H10.8 Q12.6 1.9 12.6 3.7 V12.6 M5.6 3.6 V12.8 Q5.6 14.6 7.4 14.6 H14.4" fill="none" stroke="#3a3a3a" stroke-width="1.8"/><circle cx="3.5" cy="3.6" r="1.75" fill="none" stroke="#3a3a3a" stroke-width="1.5"/><circle cx="14.5" cy="13" r="1.85" fill="none" stroke="#3a3a3a" stroke-width="1.5"/></svg>
<svg style="position:absolute;left:1526px;top:44px" width="17" height="17" viewBox="0 0 17 17"><circle cx="6.3" cy="6.6" r="4.6" fill="none" stroke="#3a3a3a" stroke-width="1.7"/><path d="M9.6 10 L14.8 15.2" stroke="#3a3a3a" stroke-width="2.6"/></svg>
<svg style="position:absolute;left:1563px;top:44px" width="17" height="18" viewBox="0 0 17 18"><path d="M3.9 13 V6.8 Q3.9 1.8 8.4 1.4 Q12.9 1.8 12.9 6.8 V13" fill="none" stroke="#3a3a3a" stroke-width="1.8"/><path d="M1.2 13.8 Q1.2 12.2 3 12.2 H13.8 Q15.6 12.2 15.6 13.8 V14.6 H1.2 Z" fill="#3a3a3a"/><circle cx="8.4" cy="1.2" r="1.1" fill="#3a3a3a"/><path d="M6.8 14.6 L8.4 16.6 L10 14.6 Z" fill="#3a3a3a"/></svg>
<svg style="position:absolute;left:12px;top:80px" width="17" height="14" viewBox="0 0 17 14"><path d="M8.5 1 L16 7.5 H14 V12.8 H10.2 V7.8 H6.8 V12.8 H3 V7.5 H1 Z" fill="#555"/></svg>
<svg style="position:absolute;left:449px;top:83px" width="9" height="9" viewBox="0 0 9 9"><path d="M1 1 L8 8 M8 1 L1 8" stroke="#444" stroke-width="1.6"/></svg>
<svg style="position:absolute;left:684px;top:83px" width="9" height="9" viewBox="0 0 9 9"><path d="M1 1 L8 8 M8 1 L1 8" stroke="#b5b5b5" stroke-width="1.4"/></svg>
<svg style="position:absolute;left:981px;top:6px" width="14" height="14" viewBox="0 0 14 14"><rect x="0.5" y="0.5" width="13" height="13" rx="1" fill="#b9bfc5" stroke="#a9b1b9"/><rect x="2.5" y="1" width="9" height="5" fill="#d7dadd"/><rect x="3" y="8.5" width="8" height="5" fill="#c9d3cf"/></svg>
<svg style="position:absolute;left:1004px;top:6px" width="14" height="14" viewBox="0 0 14 14"><rect x="3" y="0.5" width="8" height="4" fill="#dcdcdc" stroke="#a9b1b9"/><rect x="0.5" y="4.5" width="13" height="6" rx="1" fill="#b8bec4" stroke="#a9b1b9"/><rect x="3" y="9" width="8" height="4.5" fill="#dcdcdc" stroke="#a9b1b9"/></svg>
<svg style="position:absolute;left:1028px;top:6px" width="14" height="15" viewBox="0 0 14 15"><path d="M0.5 0.5 H7 L9.5 3 V13.5 H0.5 Z" fill="#d4d6d8" stroke="#a9b1b9"/><circle cx="7.5" cy="9" r="3.2" fill="#cfd3d6" stroke="#9aa2a8" stroke-width="1.4"/><path d="M9.8 11.3 L12.8 14.3" stroke="#9aa2a8" stroke-width="1.6"/></svg>
<div style="position:absolute;left:1048px;top:3px;width:1px;height:17px;background:#9c9c9c;"></div>
<svg style="position:absolute;left:1054px;top:4px" width="16" height="16" viewBox="0 0 16 16"><path d="M3.5 3.5 H9 V1 L13 4.5 L9 8 V5.6 H3.5 Z" fill="#22c222" stroke="#1a8a1a" stroke-width="0.5"/><rect x="0.7" y="10" width="6.5" height="5" rx="1.2" fill="none" stroke="#555" stroke-width="1.3"/><rect x="8.8" y="10" width="6.5" height="5" rx="1.2" fill="none" stroke="#555" stroke-width="1.3"/><rect x="5" y="11.9" width="6" height="1.3" fill="#555"/></svg>
<svg style="position:absolute;left:1078px;top:6px" width="15" height="14" viewBox="0 0 15 14"><rect x="3" y="0.5" width="8" height="6" fill="#d0d3d6" stroke="#a9b1b9"/><rect x="0.5" y="6.5" width="14" height="7" rx="1.5" fill="#c3c8cc" stroke="#a9b1b9"/><rect x="2.5" y="9" width="10" height="1.2" fill="#e2e4e6"/></svg>
<div style="position:absolute;left:1099px;top:3px;width:1px;height:17px;background:#9c9c9c;"></div>
<svg style="position:absolute;left:1105px;top:5px" width="14" height="15" viewBox="0 0 14 15"><rect x="0.5" y="0.5" width="13" height="14" rx="1" fill="#f2f2f2" stroke="#666"/><rect x="1" y="1" width="12" height="3.2" fill="#3cc43c"/><rect x="2.6" y="6.0" width="1.3" height="1.3" fill="#555"/><rect x="2.6" y="8.6" width="1.3" height="1.3" fill="#555"/><rect x="2.6" y="11.2" width="1.3" height="1.3" fill="#555"/><rect x="5.6" y="6.0" width="1.3" height="1.3" fill="#555"/><rect x="5.6" y="8.6" width="1.3" height="1.3" fill="#555"/><rect x="5.6" y="11.2" width="1.3" height="1.3" fill="#555"/><rect x="8.6" y="6.0" width="1.3" height="1.3" fill="#555"/><rect x="8.6" y="8.6" width="1.3" height="1.3" fill="#555"/><rect x="8.6" y="11.2" width="1.3" height="1.3" fill="#555"/><rect x="8.6" y="6" width="1.3" height="1.3" fill="#e33"/></svg>
<svg style="position:absolute;left:1129px;top:4px" width="14" height="16" viewBox="0 0 14 16"><rect x="0.5" y="2.5" width="13" height="13" rx="1" fill="#fff" stroke="#777"/><rect x="1" y="2.8" width="12" height="3" fill="#e08a3c"/><rect x="3" y="0.5" width="1.2" height="3" fill="#c66a2a"/><rect x="9.8" y="0.5" width="1.2" height="3" fill="#c66a2a"/><text x="2.2" y="13.8" font-family="Liberation Sans" font-size="8.5" fill="#333">31</text></svg>
<div style="position:absolute;left:1150px;top:3px;width:1px;height:17px;background:#9c9c9c;"></div>
<div style="position:absolute;left:1158px;top:7.02px;line-height:14.95px;font-size:13px;color:#8b4f1e;font-weight:bold;white-space:nowrap;text-shadow:0 1px 0 #e8d8c8;">M</div>
<div style="position:absolute;left:1178px;top:7.02px;line-height:14.95px;font-size:13px;color:#8b4f1e;font-weight:bold;white-space:nowrap;letter-spacing:-1px;text-shadow:0 1px 0 #e8d8c8;">M+</div>
<div style="position:absolute;left:1201px;top:7.02px;line-height:14.95px;font-size:13px;color:#8b4f1e;font-weight:bold;white-space:nowrap;letter-spacing:-0.5px;text-shadow:0 1px 0 #e8d8c8;">M-</div>
<div style="position:absolute;left:1224px;top:3px;width:1px;height:17px;background:#9c9c9c;"></div>
<svg style="position:absolute;left:1231px;top:5px" width="15" height="16" viewBox="0 0 15 16"><circle cx="6.5" cy="7" r="5.6" fill="#f4f4f4" stroke="#333" stroke-width="1.1"/><path d="M3.8 7 H9.2 M6.5 4.3 V9.7" stroke="#111" stroke-width="1.4"/><path d="M10.5 11 L13.6 14.1" stroke="#333" stroke-width="2"/></svg>
<svg style="position:absolute;left:1254px;top:5px" width="15" height="15" viewBox="0 0 15 15"><rect x="0.5" y="0.5" width="14" height="14" fill="#fdfdfd" stroke="#555"/><rect x="0" y="0" width="15" height="2.6" fill="#3a9af0"/><rect x="7" y="2" width="1" height="12.5" fill="#555"/></svg>
<div style="position:absolute;left:1275px;top:3px;width:1px;height:17px;background:#9c9c9c;"></div>
<svg style="position:absolute;left:1281px;top:6px" width="10" height="12" viewBox="0 0 10 12"><circle cx="5" cy="3.4" r="2.6" fill="#555"/><path d="M0.8 11 Q0.8 7 5 7 Q9.2 7 9.2 11 Z" fill="#555"/><circle cx="5" cy="3.4" r="1.4" fill="#777"/></svg>
<div style="position:absolute;left:1294.5px;top:8.06px;line-height:12.65px;font-size:11px;color:#4a3c26;font-weight:normal;white-space:nowrap;text-shadow:0 0 2px #e6e6e6;">Савинская З.Ю. (Системный прог...</div>
<div style="position:absolute;left:1481px;top:3px;width:1px;height:17px;background:#9c9c9c;"></div>
<svg style="position:absolute;left:1487px;top:4px" width="17" height="17" viewBox="0 0 17 17"><defs><radialGradient id="ig" cx="0.45" cy="0.35" r="0.65"><stop offset="0" stop-color="#ffe9a0"/><stop offset="1" stop-color="#eeaa2a"/></radialGradient></defs><circle cx="8.2" cy="8.6" r="7.8" fill="url(#ig)" stroke="#d79b3a" stroke-width="0.6"/><circle cx="8.6" cy="4.4" r="1.3" fill="#555"/><path d="M6.6 7 H9.6 L8.6 12.4 H10 L9.8 13.2 H6 L6.2 12.4 H7.2 L7.8 7.8 H6.4 Z" fill="#555"/></svg>
<svg style="position:absolute;left:1509px;top:15px" width="9" height="4" viewBox="0 0 9 4"><path d="M0 0 H9 L4.5 4 Z" fill="#333"/></svg>
<div style="position:absolute;left:1521px;top:3px;width:1px;height:17px;background:#9c9c9c;"></div>
<div style="position:absolute;left:1531px;top:15px;width:7px;height:2px;background:#333;"></div>
<svg style="position:absolute;left:1550px;top:8px" width="13" height="11" viewBox="0 0 13 11"><rect x="3.5" y="0.5" width="8.5" height="6.5" fill="none" stroke="#333" stroke-width="1"/><rect x="3.5" y="0.5" width="8.5" height="1.8" fill="#333"/><rect x="0.5" y="3.5" width="8.5" height="6.8" fill="#c4c4c4" stroke="#333" stroke-width="1"/><rect x="0.5" y="3.5" width="8.5" height="1.8" fill="#333"/></svg>
<svg style="position:absolute;left:1573px;top:7px" width="11" height="11" viewBox="0 0 11 11"><path d="M1.2 1.2 L9.8 9.8 M9.8 1.2 L1.2 9.8" stroke="#333" stroke-width="1.9"/></svg>
<svg style="position:absolute;left:1333px;top:155px" width="16" height="15" viewBox="0 0 16 15"><path d="M2.5 0.5 H9.5 L12.5 3.5 V6 H2.5 Z" fill="#fafafa" stroke="#666" stroke-width="1"/><path d="M9.5 0.5 V3.5 H12.5" fill="none" stroke="#666" stroke-width="0.8"/><rect x="0.7" y="6" width="14.6" height="7.2" rx="2" fill="#f2f2f2" stroke="#666" stroke-width="1.2"/><rect x="2.6" y="8.3" width="4" height="2.2" fill="#666"/><rect x="9.4" y="8.3" width="4" height="2.2" fill="#666"/><rect x="6" y="9" width="4" height="0.9" fill="#666"/></svg>
<div style="position:absolute;left:1355px;top:152px;width:1px;height:16px;background:#8c8c8c;"></div>
<svg style="position:absolute;left:1361px;top:155px" width="13" height="15" viewBox="0 0 13 15"><rect x="0.5" y="0.5" width="12" height="14" rx="1" fill="#f4f4f4" stroke="#6a6a6a"/><rect x="1" y="1" width="11" height="3.3" fill="#3cc43c"/><rect x="2.7" y="6.0" width="1.4" height="1.1" fill="#555"/><rect x="2.7" y="8.1" width="1.4" height="1.1" fill="#555"/><rect x="2.7" y="10.2" width="1.4" height="1.1" fill="#555"/><rect x="2.7" y="12.3" width="1.4" height="1.1" fill="#555"/><rect x="5.5" y="6.0" width="1.4" height="1.1" fill="#555"/><rect x="5.5" y="8.1" width="1.4" height="1.1" fill="#555"/><rect x="5.5" y="10.2" width="1.4" height="1.1" fill="#555"/><rect x="5.5" y="12.3" width="1.4" height="1.1" fill="#555"/><rect x="8.3" y="6.0" width="1.4" height="1.1" fill="#555"/><rect x="8.3" y="8.1" width="1.4" height="1.1" fill="#555"/><rect x="8.3" y="10.2" width="1.4" height="1.1" fill="#555"/><rect x="8.3" y="12.3" width="1.4" height="1.1" fill="#555"/><rect x="8.3" y="5.8" width="1.4" height="1.5" fill="#e33"/></svg>
<svg style="position:absolute;left:1385px;top:154px" width="14" height="16" viewBox="0 0 14 16"><rect x="0.5" y="2.5" width="12.5" height="13" rx="1.5" fill="#fff" stroke="#6a6a6a"/><rect x="1" y="2.8" width="11.5" height="3.4" fill="#d9823a"/><rect x="3" y="0.6" width="1.1" height="3" fill="#f0d0b0"/><rect x="9.3" y="0.6" width="1.1" height="3" fill="#f0d0b0"/><text x="2" y="14" font-family="Liberation Sans" font-size="8.5" fill="#333">31</text></svg>
<div style="position:absolute;left:1406px;top:152px;width:1px;height:16px;background:#8c8c8c;"></div>
<div style="position:absolute;left:1415px;top:157.74px;line-height:13.80px;font-size:12px;color:#c3ab9a;font-weight:bold;white-space:nowrap;">M</div>
<div style="position:absolute;left:1434.5px;top:157.74px;line-height:13.80px;font-size:12px;color:#c3ab9a;font-weight:bold;white-space:nowrap;letter-spacing:-1px;">M+</div>
<div style="position:absolute;left:1458px;top:157.74px;line-height:13.80px;font-size:12px;color:#c3ab9a;font-weight:bold;white-space:nowrap;letter-spacing:-0.5px;">M-</div>
<div style="position:absolute;left:1480px;top:152px;width:1px;height:16px;background:#8c8c8c;"></div>
<svg style="position:absolute;left:1488px;top:158px" width="12" height="11" viewBox="0 0 12 11"><rect x="0.75" y="0.75" width="10.5" height="9.5" fill="none" stroke="#333" stroke-width="1.3"/><rect x="0.5" y="0.5" width="11" height="2.5" fill="#333"/></svg>
<svg style="position:absolute;left:1510px;top:157px" width="11" height="11" viewBox="0 0 11 11"><path d="M1.2 1.2 L9.8 9.8 M9.8 1.2 L1.2 9.8" stroke="#333" stroke-width="1.9"/></svg>
<svg style="position:absolute;left:977px;top:736px" width="14" height="21" viewBox="0 0 14 21"><path d="M1.5 1.5 V17.4 L5.3 13.7 L8.1 19.6 L10.6 18.5 L7.9 12.7 H13 Z" fill="#fff" stroke="#111" stroke-width="1.1" stroke-linejoin="miter"/></svg></body></html>
